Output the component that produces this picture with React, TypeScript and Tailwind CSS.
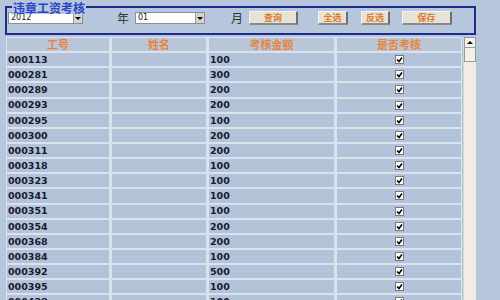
import React from "react";

const rows: [string, string][] = [
  ["000113", "100"],
  ["000281", "300"],
  ["000289", "200"],
  ["000293", "200"],
  ["000295", "100"],
  ["000300", "200"],
  ["000311", "200"],
  ["000318", "100"],
  ["000323", "100"],
  ["000341", "100"],
  ["000351", "100"],
  ["000354", "200"],
  ["000368", "200"],
  ["000384", "100"],
  ["000392", "500"],
  ["000395", "100"],
  ["000428", "100"],
];

const Select = ({ value, width }: { value: string; width: string }) => (
  <div className={`${width} h-[12px] bg-white border border-[#8a8f99] flex items-center justify-between`}>
    <span className="pl-[2px] text-[8px] leading-none text-[#222] font-['DejaVu_Sans',sans-serif]">{value}</span>
    <div className="w-[9px] h-[10px] bg-[#d6d3cb] border-l border-[#9a9a9a] flex items-center justify-center">
      <div className="w-0 h-0 border-l-[3px] border-r-[3px] border-t-[3px] border-l-transparent border-r-transparent border-t-black" />
    </div>
  </div>
);

const Btn = ({ label, width }: { label: string; width: string }) => (
  <div className={`${width} h-[14px] bg-[#e6e2d6] border-t border-l border-[#f6f4ee] border-r-2 border-b-2 border-r-[#6e6e6e] border-b-[#8a8a8a] flex items-center justify-center text-[9px] font-bold text-[#e07a30] leading-none`}>
    {label}
  </div>
);

const Check = () => (
  <div className="w-[9px] h-[9px] bg-white border border-[#7a7a7a] flex items-center justify-center">
    <svg width="7" height="7" viewBox="0 0 7 7">
      <path d="M1 3.5 L3 5.5 L6 1.5" stroke="#000" strokeWidth="1.6" fill="none" />
    </svg>
  </div>
);

export default function App() {
  return (
    <div className="w-[500px] h-[300px] overflow-hidden bg-[#b5c6dd] font-['Noto_Sans_CJK_SC',sans-serif]">
      {/* 查询条件 */}
      <div className="relative ml-[5px] mt-[6px] w-[471px] h-[29px] border-2 border-[#1f2c8e]">
        <span className="absolute -top-[7px] left-[5px] px-[1px] bg-[#b5c6dd] text-[12px] leading-[13px] font-bold text-[#2a45c8]">
          违章工资考核
        </span>
        <div className="flex items-center pt-[3px] pl-[1px]">
          <Select value="2012" width="w-[75px]" />
          <span className="ml-[34px] text-[12px] leading-none text-[#333]">年</span>
          <div className="ml-[6px]">
            <Select value="01" width="w-[70px]" />
          </div>
          <span className="ml-[26px] text-[12px] leading-none text-[#333]">月</span>
          <div className="ml-[6px] flex items-center">
            <Btn label="查询" width="w-[49px]" />
            <div className="ml-[20px]"><Btn label="全选" width="w-[30px]" /></div>
            <div className="ml-[13px]"><Btn label="反选" width="w-[29px]" /></div>
            <div className="ml-[12px]"><Btn label="保存" width="w-[50px]" /></div>
          </div>
        </div>
      </div>

      {/* 列表 */}
      <div className="flex mt-[2px] ml-[6px]">
        <div className="w-[456px] bg-[#d9e3ee] p-[1px] grid grid-cols-[102px_94px_125px_124px] gap-x-[3px] gap-y-[2px] auto-rows-[13.15px]">
          {["工号", "姓名", "考核金额", "是否考核"].map((h) => (
            <div key={h} className="bg-[#b9c6d8] flex items-center justify-center text-[11px] font-bold text-[#e8853c] leading-none">
              {h}
            </div>
          ))}
          {rows.map(([id, amt]) => (
            <React.Fragment key={id}>
              <div className="bg-[#b3c3da] flex items-center pl-[1px] text-[9.5px] font-bold text-[#1a1a2e] font-['DejaVu_Sans',sans-serif] leading-none">
                {id}
              </div>
              <div className="bg-[#b3c3da]" />
              <div className="bg-[#b3c3da] flex items-center pl-[1px] text-[9.5px] font-bold text-[#1a1a2e] font-['DejaVu_Sans',sans-serif] leading-none">
                {amt}
              </div>
              <div className="bg-[#b3c3da] flex items-center justify-center">
                <Check />
              </div>
            </React.Fragment>
          ))}
        </div>
        {/* 滚动条 */}
        <div className="ml-[1px] w-[13px] h-[270px] bg-[#efede4] border-l border-[#d8d6cc] flex flex-col">
          <div className="h-[11px] bg-[#f3f2ec] border border-[#9c9a92] flex items-center justify-center">
            <div className="w-0 h-0 border-l-[3px] border-r-[3px] border-b-[3px] border-l-transparent border-r-transparent border-b-black" />
          </div>
          <div className="h-[14px] bg-[#f1f0ea] border border-[#9c9a92] border-t-0" />
        </div>
      </div>
    </div>
  );
}
